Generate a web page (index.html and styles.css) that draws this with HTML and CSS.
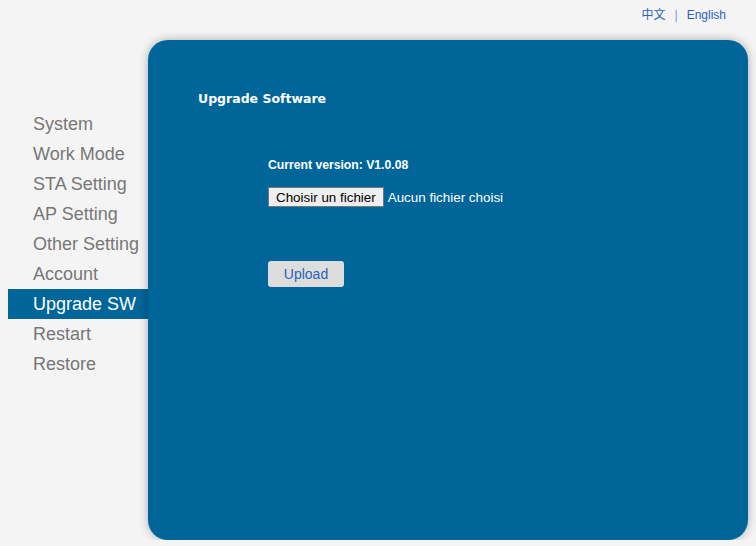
FILE: index.html
```html
<!DOCTYPE html>
<html lang="en">
<head>
    <meta charset="UTF-8">
    <title>Upgrade SW</title>
    <link rel="stylesheet" href="styles.css">
</head>
<body>
    <!-- lingua -->
    <div class="lang">
        <a href="#">中文</a><span class="sep">|</span><a href="#">English</a>
    </div>
    <div class="main">
        <!-- menu -->
        <div class="menu">
            <div class="voce">System</div>
            <div class="voce">Work Mode</div>
            <div class="voce">STA Setting</div>
            <div class="voce">AP Setting</div>
            <div class="voce">Other Setting</div>
            <div class="voce">Account</div>
            <div class="voce attiva">Upgrade SW</div>
            <div class="voce">Restart</div>
            <div class="voce">Restore</div>
        </div>
        <!-- pannello -->
        <div class="pannello">
            <div class="titolo">Upgrade Software</div>
            <div class="corpo">
                <div class="versione">Current version: V1.0.08</div>
                <div class="file">
                    <button class="scegli">Choisir un fichier</button>
                    <span>Aucun fichier choisi</span>
                </div>
                <button class="upload">Upload</button>
            </div>
        </div>
    </div>
</body>
</html>
```

FILE: styles.css
```css
:root{
    --bg-color: #f4f4f4;
    --blue: #006699;
    --menu-text: #777777;
    --link: #2a62b8;
}
body{
    margin: 0;
    background-color: var(--bg-color);
    font-family: "Liberation Sans", Arial, sans-serif;
}
.lang{
    height: 40px;
    box-sizing: border-box;
    padding-top: 5px;
    padding-right: 30px;
    text-align: right;
    font-size: 12px;
    color: var(--link);
}
.lang a{
    color: var(--link);
    text-decoration: none;
    font-family: "Liberation Sans", "Noto Sans CJK SC", sans-serif;
}
.sep{
    margin: 0 9px;
    color: #6a9ad8;
}
.main{
    display: flex;
}
.menu{
    width: 140px;
    margin-left: 8px;
    padding-top: 69px;
}
.voce{
    height: 30px;
    line-height: 30px;
    padding-left: 25px;
    font-size: 18px;
    color: var(--menu-text);
    white-space: nowrap;
}
.attiva{
    background-color: var(--blue);
    color: #ffffff;
}
.pannello{
    width: 600px;
    height: 500px;
    background-color: var(--blue);
    border-radius: 20px;
    box-shadow: 0 0 10px rgba(0,0,0,.3);
    color: #ffffff;
    box-sizing: border-box;
    padding-top: 51px;
    padding-left: 50px;
}
.titolo{
    font-weight: bold;
    font-family: "DejaVu Sans", sans-serif;
    font-size: 12.5px;
}
.corpo{
    padding-left: 70px;
    padding-top: 52px;
    font-size: 12px;
}
.versione{
    font-weight: bold;
    font-size: 12.2px;
}
.file{
    margin-top: 15px;
    display: flex;
    align-items: center;
    font-size: 13.4px;
}
.scegli{
    font-family: "Liberation Sans", Arial, sans-serif;
    font-size: 13.4px;
    height: 20px;
    padding: 0 7px;
    background-color: #efefef;
    border: 1px solid #767676;
    border-radius: 0;
    color: #000000;
    margin-right: 4px;
}
.upload{
    margin-top: 54px;
    width: 76px;
    height: 26px;
    background-color: #dddddd;
    color: #2a62b8;
    border: 0;
    border-radius: 3px;
    font-size: 14px;
    font-family: "Liberation Sans", Arial, sans-serif;
}
```
